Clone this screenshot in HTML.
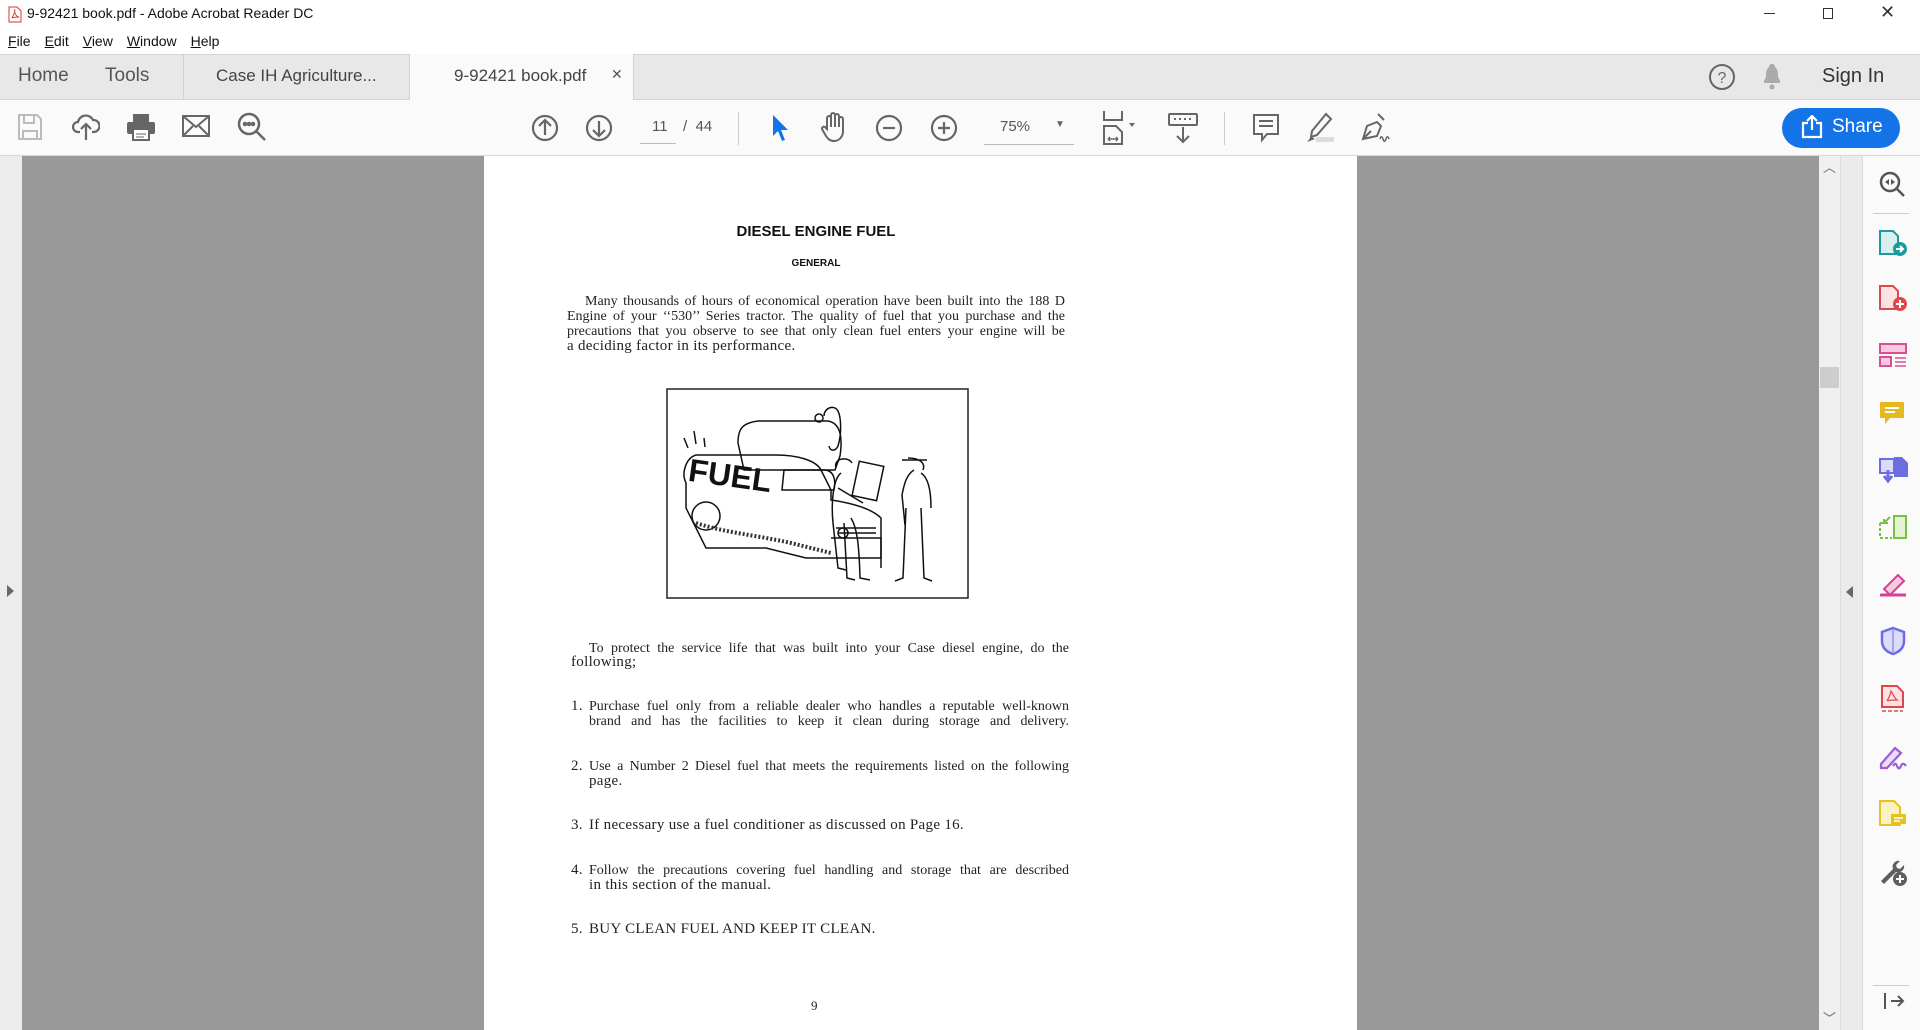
<!DOCTYPE html>
<html><head><meta charset="utf-8">
<style>
*{margin:0;padding:0;box-sizing:border-box}
body{width:1920px;height:1030px;overflow:hidden;background:#fff;font-family:"Liberation Sans",sans-serif;position:relative;color:#222}
.a{position:absolute}
.menu span{margin-right:14px}
.menu u{text-decoration:underline}
.pl{position:absolute;left:0;width:100%;font-family:"Liberation Serif",serif;font-size:15px;letter-spacing:0.3px;line-height:15px;color:#222;white-space:nowrap;margin-top:1px}
.j{text-align:justify;text-align-last:justify;font-size:14px;letter-spacing:0}
.ic{position:absolute}
</style></head><body>
<!-- title bar -->
<div class="a" style="left:0;top:0;width:1920px;height:29px;background:#fff"></div>
<svg class="a" style="left:8px;top:6px" width="14" height="17" viewBox="0 0 14 17"><path d="M1 1h8l4 4v11H1z" fill="#fff" stroke="#d9352b"/><path d="M4 12c2-4 3-7 3-8s-1 0 0 3 3 4 4 4-5 0-7 1" fill="none" stroke="#d9352b" stroke-width=".9"/></svg>
<div class="a" style="left:27px;top:5px;font-size:14px;color:#111">9-92421 book.pdf - Adobe Acrobat Reader DC</div>
<div class="a" style="left:1764px;top:13px;width:11px;height:1px;background:#333"></div>
<div class="a" style="left:1823px;top:8px;width:10px;height:11px;border:1px solid #333"></div>
<div class="a" style="left:1880px;top:2px;font-size:18px;color:#333">✕</div>
<!-- menu -->
<div class="a menu" style="left:8px;top:33px;font-size:14px;color:#111"><span><u>F</u>ile</span><span><u>E</u>dit</span><span><u>V</u>iew</span><span><u>W</u>indow</span><span><u>H</u>elp</span></div>
<!-- tab bar -->
<div class="a" style="left:0;top:54px;width:1920px;height:46px;background:#e8e8e8;border-top:1px solid #d4d4d4;border-bottom:1px solid #d4d4d4"></div>
<div class="a" style="left:18px;top:65px;font-size:19px;color:#555">Home</div>
<div class="a" style="left:105px;top:65px;font-size:19px;color:#555">Tools</div>
<div class="a" style="left:183px;top:54px;width:1px;height:46px;background:#d0d0d0"></div>
<div class="a" style="left:216px;top:66px;font-size:17px;color:#444">Case IH Agriculture...</div>
<div class="a" style="left:409px;top:54px;width:225px;height:47px;background:#fafafa;border-left:1px solid #d0d0d0;border-right:1px solid #d0d0d0"></div>
<div class="a" style="left:454px;top:66px;font-size:17px;color:#444">9-92421 book.pdf</div>
<div class="a" style="left:611px;top:66px;font-size:14px;color:#555">✕</div>
<svg class="a" style="left:1708px;top:63px" width="28" height="28"><circle cx="14" cy="14" r="12" fill="none" stroke="#666" stroke-width="2"/><text x="14" y="20" text-anchor="middle" font-size="16" fill="#666" font-family="Liberation Sans">?</text></svg>
<svg class="a" style="left:1760px;top:62px" width="24" height="30"><path d="M12 2c-2 0-3 1-3 3-3 2-3 6-3 10l-2 4v2h16v-2l-2-4c0-4 0-8-3-10 0-2-1-3-3-3z" fill="#aaa"/><circle cx="12" cy="25" r="2.5" fill="#aaa"/></svg>
<div class="a" style="left:1822px;top:65px;font-size:20px;color:#333">Sign In</div>
<!-- toolbar -->
<div class="a" style="left:0;top:100px;width:1920px;height:56px;background:#fafafa;border-bottom:1px solid #d8d8d8"></div>
<svg class="a" style="left:17px;top:113px" width="26" height="28" fill="none" stroke="#bbb" stroke-width="2"><path d="M2 2h18l4 4v20H2z"/><path d="M7 2v8h10V2M6 26v-8h14v8"/></svg>
<svg class="a" style="left:72px;top:112px" width="28" height="30" fill="none" stroke="#666" stroke-width="2.2"><path d="M8 20H6a5 5 0 0 1 0-10 8 8 0 0 1 15-2 6 6 0 0 1 1 12h-2"/><path d="M14 28V12M9 17l5-5 5 5"/></svg>
<svg class="a" style="left:126px;top:113px" width="30" height="28"><rect x="7" y="1" width="16" height="8" fill="#666"/><rect x="1" y="9" width="28" height="12" rx="2" fill="#666"/><rect x="7" y="16" width="16" height="11" fill="#fff" stroke="#666" stroke-width="2"/><path d="M10 21h10M10 24h8" stroke="#666"/></svg>
<svg class="a" style="left:182px;top:115px" width="28" height="22" fill="none" stroke="#666" stroke-width="2"><rect x="1" y="1" width="26" height="20"/><path d="M1 1l13 11L27 1M1 21l10-10M27 21L17 11"/></svg>
<svg class="a" style="left:237px;top:112px" width="30" height="30" fill="none" stroke="#666" stroke-width="2.5"><circle cx="12" cy="12" r="10"/><path d="M19 19l9 9"/><circle cx="8" cy="12" r="1" fill="#666"/><circle cx="12" cy="12" r="1" fill="#666"/><circle cx="16" cy="12" r="1" fill="#666"/></svg>
<svg class="a" style="left:531px;top:114px" width="28" height="28" fill="none" stroke="#666" stroke-width="2.2"><circle cx="14" cy="14" r="12"/><path d="M14 21V7M8 12l6-6 6 6"/></svg>
<svg class="a" style="left:585px;top:114px" width="28" height="28" fill="none" stroke="#666" stroke-width="2.2"><circle cx="14" cy="14" r="12"/><path d="M14 7v14M8 16l6 6 6-6"/></svg>
<div class="a" style="left:652px;top:118px;font-size:15px;color:#555">11</div>
<div class="a" style="left:640px;top:143px;width:36px;height:1px;background:#bbb"></div>
<div class="a" style="left:683px;top:118px;font-size:15px;color:#555">/ &nbsp;44</div>
<div class="a" style="left:738px;top:112px;width:1px;height:33px;background:#ccc"></div>
<svg class="a" style="left:770px;top:113px" width="20" height="30"><path d="M3 2l15 15h-7l4 10-3 1-4-10-5 5z" fill="#1473e6"/></svg>
<svg class="a" style="left:820px;top:111px" width="28" height="32" fill="none" stroke="#666" stroke-width="2"><path d="M7 18V7a2 2 0 0 1 4 0v9V4a2 2 0 0 1 4 0v12V5a2 2 0 0 1 4 0v11V8a2 2 0 0 1 4 0v12c0 6-4 10-9 10-4 0-6-2-8-5l-4-7a2 2 0 0 1 3-2z"/></svg>
<svg class="a" style="left:875px;top:114px" width="28" height="28" fill="none" stroke="#666" stroke-width="2.2"><circle cx="14" cy="14" r="12"/><path d="M8 14h12"/></svg>
<svg class="a" style="left:930px;top:114px" width="28" height="28" fill="none" stroke="#666" stroke-width="2.2"><circle cx="14" cy="14" r="12"/><path d="M8 14h12M14 8v12"/></svg>
<div class="a" style="left:1000px;top:118px;font-size:15px;color:#555">75%</div>
<div class="a" style="left:1055px;top:119px;font-size:10px;color:#666">▼</div>
<div class="a" style="left:984px;top:144px;width:90px;height:1px;background:#bbb"></div>
<svg class="a" style="left:1102px;top:110px" width="40" height="36" fill="none" stroke="#666" stroke-width="2"><path d="M2 1v9h18V1"/><path d="M2 34V16h12l6 6v12z"/><path d="M6 29h10M6 29l2-2M6 29l2 2M16 29l-2-2M16 29l-2 2" stroke-width="1.4"/><path d="M27 13l3 4 3-4z" fill="#666" stroke="none"/></svg>
<svg class="a" style="left:1168px;top:113px" width="30" height="32" fill="none" stroke="#666" stroke-width="2"><rect x="1" y="1" width="28" height="11" rx="1"/><path d="M6 6h2M11 6h2M16 6h2M21 6h2"/><path d="M15 14v15M9 23l6 6 6-6"/></svg>
<div class="a" style="left:1224px;top:112px;width:1px;height:33px;background:#ccc"></div>
<svg class="a" style="left:1252px;top:113px" width="28" height="30" fill="none" stroke="#666" stroke-width="2"><path d="M2 2h24v19H15l-5 6v-6H2z"/><path d="M7 8h14M7 13h14"/></svg>
<svg class="a" style="left:1304px;top:111px" width="32" height="33"><path d="M22 3l5 5-14 16-6 2 1-6z" fill="none" stroke="#666" stroke-width="2"/><rect x="12" y="26" width="18" height="5" fill="#ddd"/><path d="M3 31l4-5 4 2z" fill="#666"/></svg>
<svg class="a" style="left:1358px;top:111px" width="34" height="33" fill="none" stroke="#666" stroke-width="2"><path d="M20 3l6 6M5 28l4-13 10-4 4 4-4 10z"/><path d="M5 28l8-8"/><path d="M22 28c1-3 2-3 3 0s2 3 3 0 2-3 3 0" stroke-width="1.5"/></svg>
<div class="a" style="left:1782px;top:108px;width:118px;height:40px;border-radius:20px;background:#1473e6"></div>
<svg class="a" style="left:1801px;top:115px" width="22" height="24" fill="none" stroke="#fff" stroke-width="2.2"><path d="M7 8H2v14h18V8h-5M11 15V2M6 6l5-5 5 5"/></svg>
<div class="a" style="left:1832px;top:116px;font-size:19px;color:#fff">Share</div>
<!-- left strip -->
<div class="a" style="left:0;top:156px;width:22px;height:874px;background:#ececec"></div>
<div class="a" style="left:7px;top:585px;width:0;height:0;border-top:6px solid transparent;border-bottom:6px solid transparent;border-left:7px solid #666"></div>
<!-- gray area -->
<div class="a" style="left:22px;top:156px;width:1797px;height:874px;background:#999"></div>
<!-- scrollbar -->
<div class="a" style="left:1819px;top:156px;width:21px;height:874px;background:#f0f0f0"></div>
<div class="a" style="left:1820px;top:367px;width:19px;height:21px;background:#cdcdcd"></div>
<div class="a" style="left:1823px;top:157px;font-size:13px;color:#666">︿</div>
<div class="a" style="left:1823px;top:1008px;font-size:13px;color:#666">﹀</div>
<div class="a" style="left:1840px;top:156px;width:22px;height:874px;background:#ebebeb;border-left:1px solid #ddd"></div>
<div class="a" style="left:1846px;top:586px;width:0;height:0;border-top:6px solid transparent;border-bottom:6px solid transparent;border-right:7px solid #666"></div>
<div class="a" style="left:1862px;top:156px;width:58px;height:874px;background:#fafafa;border-left:1px solid #ddd"></div>
<!-- right icons -->
<svg class="ic" style="left:1878px;top:170px" width="28" height="28" fill="none" stroke="#555" stroke-width="2.5"><circle cx="12" cy="12" r="9"/><path d="M19 19l7 7"/><path d="M7 12l4-3v6zM17 12l-4-3v6z" fill="#555" stroke="none"/></svg>
<div class="a" style="left:1873px;top:213px;width:36px;height:1px;background:#ccc"></div>
<svg class="ic" style="left:1878px;top:229px" width="30" height="28"><path d="M2 2h13l5 5v18H2z" fill="#d9efef" stroke="#1a9c9c" stroke-width="2"/><circle cx="22" cy="20" r="7" fill="#1a9c9c"/><path d="M18 20h7M22 17l3 3-3 3" stroke="#fff" stroke-width="2" fill="none"/></svg>
<svg class="ic" style="left:1878px;top:284px" width="30" height="28"><path d="M2 2h13l5 5v18H2z" fill="#fbe3e3" stroke="#e0474c" stroke-width="2"/><circle cx="22" cy="20" r="7" fill="#e0474c"/><path d="M18 20h8M22 16v8" stroke="#fff" stroke-width="2"/></svg>
<svg class="ic" style="left:1878px;top:342px" width="30" height="26"><rect x="2" y="2" width="26" height="9" fill="#f7c9e0" stroke="#d94f94" stroke-width="2"/><rect x="2" y="15" width="11" height="9" fill="#f7c9e0" stroke="#d94f94" stroke-width="2"/><path d="M17 16h11M17 20h11M17 24h11" stroke="#d94f94" stroke-width="1.5"/></svg>
<svg class="ic" style="left:1878px;top:400px" width="28" height="28"><path d="M2 2h24v16H12l-5 6v-6H2z" fill="#e6b91e"/><path d="M7 8h14M7 12h10" stroke="#fff" stroke-width="2"/></svg>
<svg class="ic" style="left:1878px;top:455px" width="32" height="30"><path d="M2 4h14v14H2z" fill="#dcdcfa" stroke="#6b6de0" stroke-width="2"/><path d="M16 2h8l6 6v14H16z" fill="#6b6de0"/><path d="M10 15v10M6 21l4 5 4-5" stroke="#6b6de0" stroke-width="3" fill="none"/></svg>
<svg class="ic" style="left:1878px;top:513px" width="30" height="28" fill="none" stroke="#7ac143" stroke-width="2"><rect x="16" y="3" width="12" height="22" fill="#e3f3d4"/><path d="M2 10v15h12M2 10h4" stroke-dasharray="3 2"/><path d="M12 4l-6 6M6 6v4h4"/></svg>
<svg class="ic" style="left:1878px;top:571px" width="30" height="26"><path d="M6 18L20 4l6 6-14 14z" fill="#f7c9e0" stroke="#d6409a" stroke-width="2"/><path d="M2 24h26" stroke="#d6409a" stroke-width="3"/></svg>
<svg class="ic" style="left:1880px;top:626px" width="26" height="30"><path d="M13 2l11 4v9c0 7-5 11-11 13C7 26 2 22 2 15V6z" fill="#dcdcfa" stroke="#6b6de0" stroke-width="2.5"/><path d="M13 4v22" stroke="#6b6de0"/></svg>
<svg class="ic" style="left:1880px;top:684px" width="26" height="30"><path d="M2 2h15l6 6v15H2z" fill="#fbe3e3" stroke="#e0474c" stroke-width="2"/><path d="M7 17c3-5 4-9 4-10s3 7 6 9c-4 0-8 0-10 1" fill="none" stroke="#e0474c" stroke-width="1.2"/><path d="M2 27h21" stroke="#e0474c" stroke-width="1.5" stroke-dasharray="4 2"/></svg>
<svg class="ic" style="left:1877px;top:742px" width="32" height="28" fill="none" stroke="#9c5ed6" stroke-width="2.2"><path d="M4 22L18 6l6 5-14 15H4z" fill="#e9dcf7"/><path d="M16 24c2-3 3-3 4 0s3 3 4 0 3-3 5 0"/></svg>
<svg class="ic" style="left:1878px;top:799px" width="30" height="30"><path d="M2 2h14l6 6v18H2z" fill="#fbf2c4" stroke="#e6c21e" stroke-width="2"/><rect x="13" y="15" width="15" height="10" fill="#e6c21e"/><path d="M16 19h9M16 22h6" stroke="#fff" stroke-width="1.5"/></svg>
<svg class="ic" style="left:1878px;top:857px" width="30" height="30"><path d="M3 24L15 12a6 6 0 0 1 7-8l-4 4 1 3 3 1 4-4a6 6 0 0 1-8 7L6 27z" fill="#5f5f5f"/><circle cx="22" cy="22" r="7" fill="#5f5f5f"/><path d="M18 22h8M22 18v8" stroke="#fff" stroke-width="2"/></svg>
<div class="a" style="left:1873px;top:985px;width:36px;height:1px;background:#ccc"></div>
<svg class="ic" style="left:1882px;top:991px" width="24" height="20" fill="none" stroke="#555" stroke-width="2.5"><path d="M3 2v16M9 10h12M16 5l5 5-5 5" stroke-width="2"/></svg>
<!-- page -->
<div class="a" style="left:484px;top:156px;width:873px;height:874px;background:#fff">
  <div class="a" style="left:132px;top:67px;width:400px;text-align:center;font-weight:bold;font-size:15px;color:#111">DIESEL ENGINE FUEL</div>
  <div class="a" style="left:132px;top:102px;width:400px;text-align:center;font-weight:bold;font-size:10px;color:#111">GENERAL</div>
  <div class="a" style="left:83px;top:137px;width:498px;height:60px">
    <div class="pl j" style="top:0;padding-left:18px">Many thousands of hours of economical operation have been built into the 188 D</div>
    <div class="pl j" style="top:15px">Engine of your ‘‘530’’ Series tractor. The quality of fuel that you purchase and the</div>
    <div class="pl j" style="top:30px">precautions that you observe to see that only clean fuel enters your engine will be</div>
    <div class="pl" style="top:45px">a deciding factor in its performance.</div>
  </div>
  <!-- illustration -->
  <svg class="a" style="left:182px;top:232px" width="303" height="211" viewBox="0 0 303 211">
    <rect x="1" y="1" width="301" height="209" fill="#fff" stroke="#222" stroke-width="1.5"/>
    <g fill="none" stroke="#111" stroke-width="1.5">
      <path d="M72 55c0-15 5-20 20-22h70c12 2 15 15 12 35l-5 14H78z"/>
      <path d="M158 28c0-8 10-12 14-5 3 6 4 22 0 35-3 6-8 5-9 0"/>
      <circle cx="153" cy="30" r="4"/>
      <path d="M18 50l4 10M28 43l2 13M38 50l1 9"/>
      <path d="M20 95c-5-10 0-25 10-28h80c20 0 40 5 45 15l10 20v10c20 3 40 8 50 18v40H140l-40-10H40L20 120z"/>
      <path d="M118 82h40c10 0 12 10 10 20h-52z"/>
      <circle cx="40" cy="128" r="14"/>
      <path d="M165 150h50v30M170 140h40M172 145h38"/>
      <circle cx="177" cy="145" r="5"/>
    </g>
    <text x="22" y="98" font-family="Liberation Sans" font-weight="bold" font-size="32" fill="#111" transform="rotate(8 60 90)">FUEL</text>
    <g fill="none" stroke="#111" stroke-width="1.5">
      <path d="M170 80c-3-10 12-12 16-5M175 85c-8 6-10 30-8 50l5 45 8 2M172 100l25 15"/>
      <path d="M178 135l3 55 8 2M185 130c6 10 8 25 9 60l10 2"/>
      <rect x="190" y="75" width="25" height="35" transform="rotate(12 200 90)"/>
      <path d="M242 70c10 0 18 4 15 12M236 72h25M248 82c-8 5-10 15-12 25l3 30M255 85c8 5 10 20 10 35M240 120l-3 70 -8 3M255 120l3 70 8 3"/>
    </g>
    <path d="M30 135c30 10 60 12 95 20l40 10" stroke="#333" stroke-width="4" stroke-dasharray="2 2" fill="none"/>
  </svg>
  <div class="a" style="left:87px;top:484px;width:498px;height:30px">
    <div class="pl j" style="top:0;padding-left:18px">To protect the service life that was built into your Case diesel engine, do the</div>
    <div class="pl" style="top:14px">following;</div>
  </div>
  <div class="a" style="left:87px;top:542px;width:498px;height:30px">
    <div class="pl" style="top:0">1.</div>
    <div class="pl j" style="top:0;left:18px;width:480px">Purchase fuel only from a reliable dealer who handles a reputable well-known</div>
    <div class="pl j" style="top:15px;left:18px;width:480px">brand and has the facilities to keep it clean during storage and delivery.</div>
  </div>
  <div class="a" style="left:87px;top:602px;width:498px;height:30px">
    <div class="pl" style="top:0">2.</div>
    <div class="pl j" style="top:0;left:18px;width:480px">Use a Number 2 Diesel fuel that meets the requirements listed on the following</div>
    <div class="pl" style="top:15px;left:18px">page.</div>
  </div>
  <div class="a" style="left:87px;top:661px;width:498px;height:15px">
    <div class="pl" style="top:0">3.</div>
    <div class="pl" style="top:0;left:18px">If necessary use a fuel conditioner as discussed on Page 16.</div>
  </div>
  <div class="a" style="left:87px;top:706px;width:498px;height:30px">
    <div class="pl" style="top:0">4.</div>
    <div class="pl j" style="top:0;left:18px;width:480px">Follow the precautions covering fuel handling and storage that are described</div>
    <div class="pl" style="top:15px;left:18px">in this section of the manual.</div>
  </div>
  <div class="a" style="left:87px;top:765px;width:498px;height:15px">
    <div class="pl" style="top:0">5.</div>
    <div class="pl" style="top:0;left:18px">BUY CLEAN FUEL AND KEEP IT CLEAN.</div>
  </div>
  <div class="a" style="left:327px;top:842px;font-family:'Liberation Serif',serif;font-size:13px;color:#222">9</div>
</div>
</body></html>
